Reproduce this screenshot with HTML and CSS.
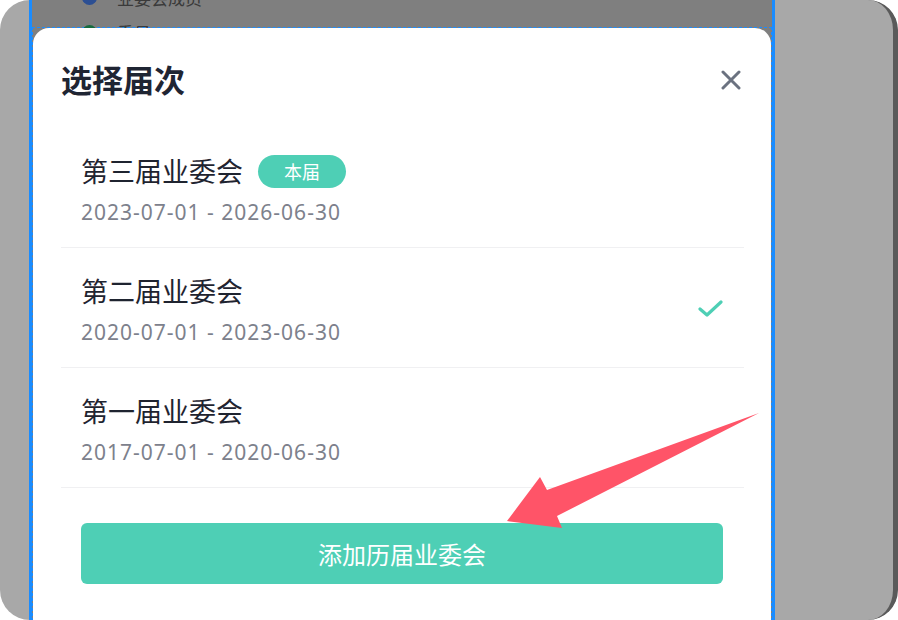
FILE: index.html
```html
<!DOCTYPE html>
<html lang="zh">
<head>
<meta charset="utf-8">
<title>选择届次</title>
<link rel="stylesheet" href="styles.css">
</head>
<body>
<div class="frame">
  <div class="side"></div>
  <div class="screen">
    <div class="behind">
      <div class="bg-row r1"><span class="dot blue"></span><span class="bg-text">业委会成员</span></div>
      <div class="bg-row r2"><span class="dot green"></span><span class="bg-text">委员</span></div>
    </div>
    <div class="selected">
      <div class="card">
        <div class="head">
          <h1 class="title">选择届次</h1>
          <svg class="close" width="20" height="20" viewBox="0 0 20 20"><path d="M2 2 L18 18 M18 2 L2 18" stroke="#6b7280" stroke-width="3" stroke-linecap="round"/></svg>
        </div>
        <ul class="list">
          <li class="item">
            <div class="info">
              <div class="name">第三届业委会<span class="badge">本届</span></div>
              <div class="date">2023-07-01 - 2026-06-30</div>
            </div>
          </li>
          <li class="item">
            <div class="info">
              <div class="name">第二届业委会</div>
              <div class="date">2020-07-01 - 2023-06-30</div>
            </div>
            <svg class="check" width="26" height="20" viewBox="0 0 26 20"><path d="M2 9 L9 15 L23 2" fill="none" stroke="#4ecfb5" stroke-width="3.2" stroke-linecap="round" stroke-linejoin="round"/></svg>
          </li>
          <li class="item">
            <div class="info">
              <div class="name">第一届业委会</div>
              <div class="date">2017-07-01 - 2020-06-30</div>
            </div>
          </li>
        </ul>
        <button class="add">添加历届业委会</button>
      </div>
    </div>
  </div>
  <div class="side right"></div>
  <svg class="arrow" width="898" height="620" viewBox="0 0 898 620"><polygon points="759,413 547,490 540,477 507,521 562,528 557,516" fill="#ff5468"/></svg>
</div>
</body>
</html>
```
FILE: styles.css
```css
* { box-sizing: border-box; }
html, body { margin: 0; padding: 0; background: #ffffff; }
body { font-family: "Noto Sans CJK SC", "Noto Sans", sans-serif; }
.frame {
  position: relative;
  width: 898px;
  height: 620px;
  display: flex;
  background: #a8a8a8;
  border-radius: 30px;
  overflow: hidden;
}
.side { width: 29px; flex: none; }
.side.right {
  flex: 1;
  border-right: 5px solid #5a5a5a;
  border-radius: 0 30px 30px 0;
  background: #a8a8a8;
}
.screen {
  position: relative;
  width: 746px;
  flex: none;
  background: #7f7f7f;
  border-left: 3px solid #1a8cff;
  border-right: 3px solid #1a8cff;
  padding: 28px 1px 0 1px;
}
.behind { position: absolute; left: 0; top: 0; right: 0; height: 28px; overflow: hidden; }
.bg-row { position: absolute; left: 50px; display: flex; align-items: center; gap: 20px; height: 20px; }
.bg-row.r1 { top: -13px; }
.bg-row.r2 { top: 22px; }
.dot { width: 15px; height: 15px; border-radius: 50%; display: block; }
.dot.blue { background: #2c4f93; }
.dot.green { background: #166b3e; }
.bg-text { color: #3a3a3a; font-size: 17px; }
.selected { outline: 1px dashed #1a8cff; height: 100%; }
.card {
  background: #ffffff;
  border-radius: 16px 16px 0 0;
  height: 100%;
  padding: 32px 27px 0 28px;
}
.head { display: flex; justify-content: space-between; align-items: center; height: 38px; margin-bottom: 30px; }
.title { margin: 0; font-size: 31px; line-height: 38px; font-weight: 700; color: #1f2533; }
.close { margin-right: 3px; margin-top: 2px; }
.list { list-style: none; margin: 0; padding: 0; }
.item {
  display: flex;
  align-items: center;
  justify-content: space-between;
  padding: 26px 20px 21px 20px;
  border-bottom: 1px solid #f0f0f2;
}
.name { display: flex; align-items: center; font-size: 27px; line-height: 34px; color: #1f2430; }
.badge {
  margin-left: 15px;
  height: 33px;
  padding: 0 26px;
  border-radius: 17px;
  background: #4ecfb5;
  color: #ffffff;
  font-size: 18px;
  line-height: 33px;
}
.date {
  margin-top: 10px;
  font-size: 21px;
  letter-spacing: 1px;
  line-height: 28px;
  color: #7d818c;
  font-family: "Noto Sans", "Noto Sans CJK SC", sans-serif;
}
.add {
  display: block;
  margin: 35px 20px 0 20px;
  width: 642px;
  height: 61px;
  border: none;
  border-radius: 6px;
  background: #4ecfb5;
  color: #ffffff;
  font-family: "Noto Sans CJK SC", sans-serif;
  font-size: 24px;
}
.arrow { position: absolute; left: 0; top: 0; pointer-events: none; }
```
